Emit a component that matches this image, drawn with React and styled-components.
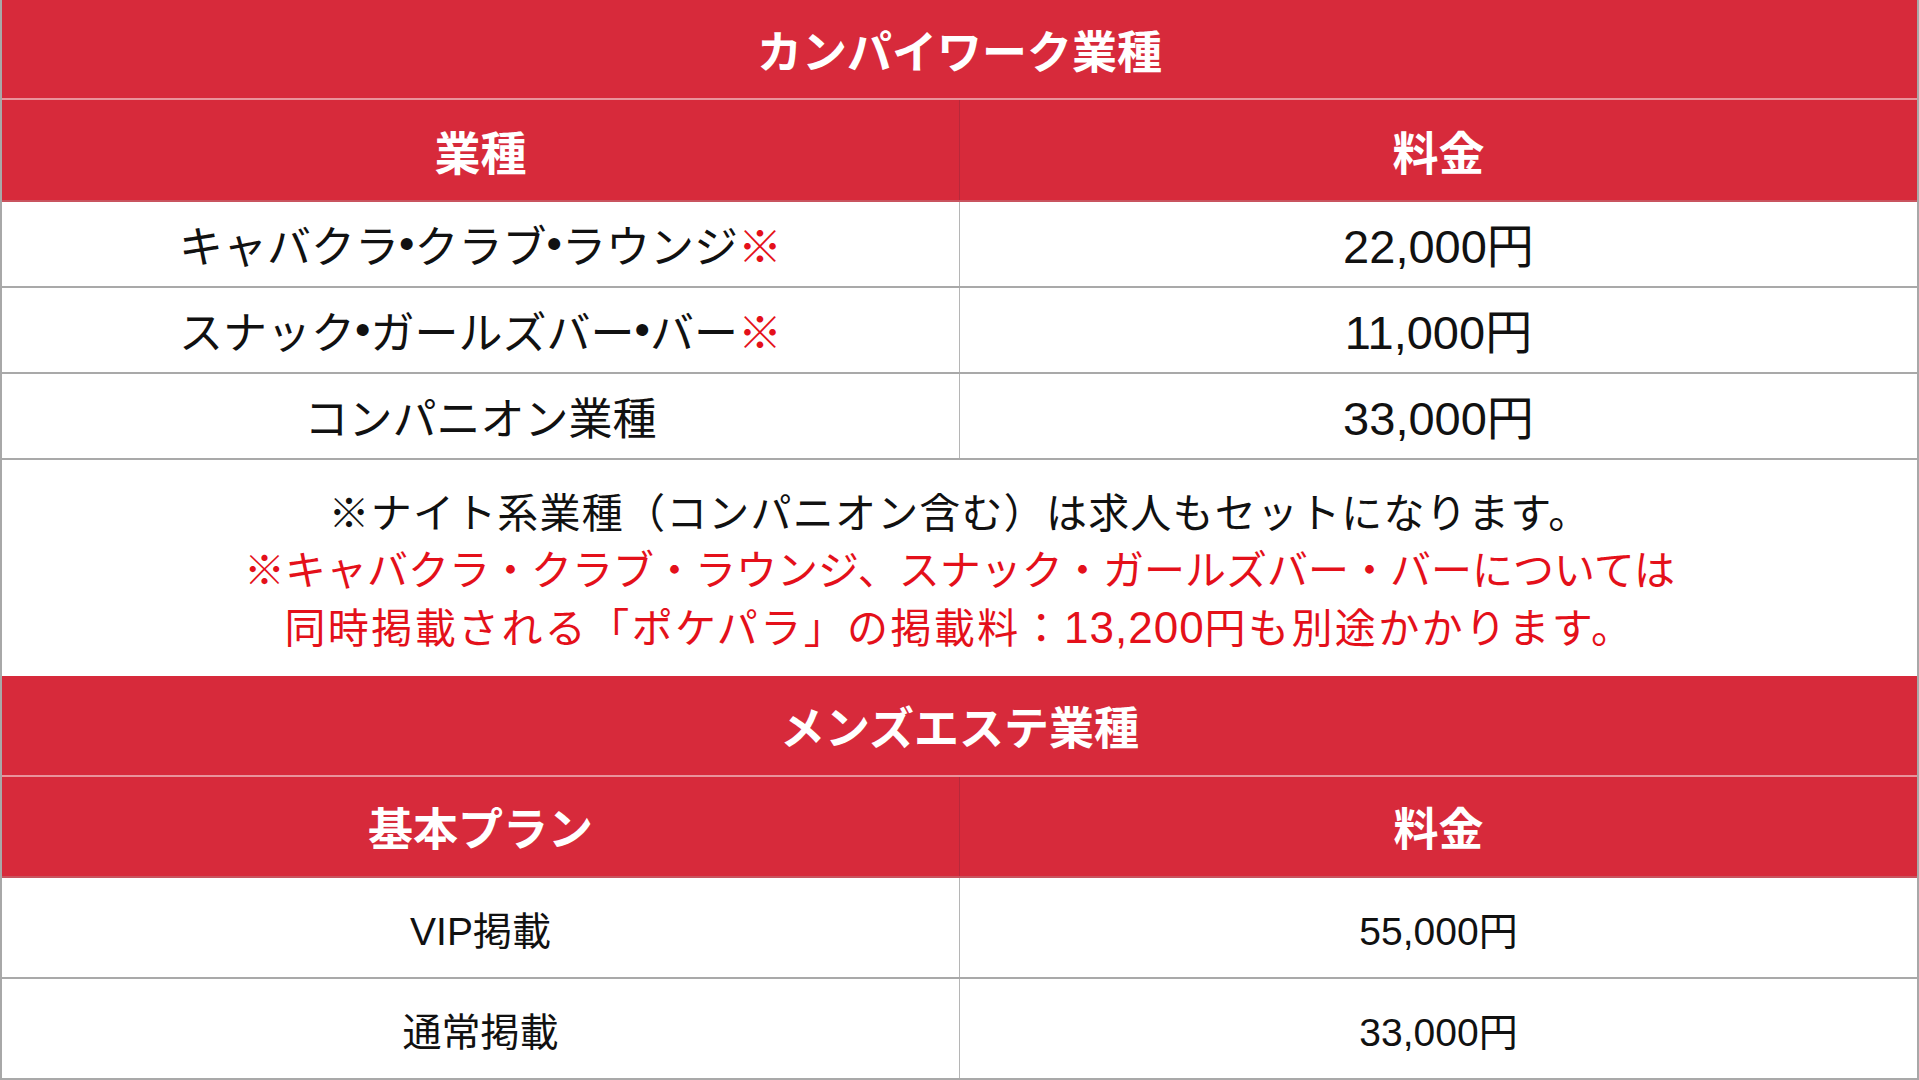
import React from "react";
import styled, { createGlobalStyle } from "styled-components";

const Global = createGlobalStyle`
  html, body { margin: 0; padding: 0; background: #ffffff; overflow: hidden; }
  body { font-family: "Liberation Sans", "Noto Sans CJK JP", sans-serif; }
  * { box-sizing: border-box; }
`;

const RED = "#d72a3b";
const TEXT_RED = "#e4101a";

const Page = styled.div`
  width: 1919px;
  height: 1080px;
  display: flex;
  flex-direction: column;
  background: #ffffff;
  border-left: 2px solid #a8a8a8;
  border-right: 2px solid #a8a8a8;
`;

const SectionTitle = styled.div`
  height: ${(p) => p.$h}px;
  background: ${RED};
  color: #ffffff;
  font-family: "Noto Sans CJK JP", sans-serif;
  font-weight: 700;
  font-size: 45px;
  display: flex;
  align-items: center;
  justify-content: center;
  border-bottom: 2px solid #e9939b;
`;

const Row = styled.div`
  height: ${(p) => p.$h}px;
  display: grid;
  grid-template-columns: 958px 1fr;
  background: ${(p) => (p.$head ? RED : "#ffffff")};
  border-bottom: 2px solid ${(p) => (p.$head ? "#c9545f" : "#a9a9a9")};
`;

const Cell = styled.div`
  display: flex;
  align-items: center;
  justify-content: center;
  border-right: ${(p) => (p.$first ? `1px solid ${p.$head ? "#b8283a" : "#b5b5b5"}` : "none")};
  color: ${(p) => (p.$head ? "#ffffff" : "#111111")};
  font-weight: ${(p) => (p.$head ? 700 : 400)};
  font-size: ${(p) => p.$size}px;
  font-family: ${(p) =>
    p.$head ? `"Noto Sans CJK JP", sans-serif` : `"Liberation Sans", "Noto Sans CJK JP", sans-serif`};
  white-space: nowrap;
  padding-bottom: ${(p) => p.$lift || 0}px;
`;

const Mark = styled.span`
  color: ${TEXT_RED};
`;

const Dot = styled.span`
  font-family: "Liberation Sans", sans-serif;
`;

const Notes = styled.div`
  height: 216px;
  display: flex;
  flex-direction: column;
  align-items: center;
  justify-content: center;
  padding-top: 2px;
  font-family: "Noto Sans CJK JP", "Liberation Sans", sans-serif;
  font-weight: 400;
  font-size: 41px;
  line-height: 57.5px;
  white-space: nowrap;
`;

const NoteLine = styled.div`
  color: ${(p) => (p.$red ? TEXT_RED : "#111111")};
  letter-spacing: ${(p) => p.$ls || 0}px;
`;

const Num = styled.span`
  font-family: "Liberation Sans", sans-serif;
  font-size: 44px;
  letter-spacing: 1px;
`;

const kanpai = [
  {
    name: (
      <>
        キャバクラ<Dot>•</Dot>クラブ<Dot>•</Dot>ラウンジ<Mark>※</Mark>
      </>
    ),
    price: "22,000円",
    h: 86,
  },
  {
    name: (
      <>
        スナック<Dot>•</Dot>ガールズバー<Dot>•</Dot>バー<Mark>※</Mark>
      </>
    ),
    price: "11,000円",
    h: 86,
  },
  { name: "コンパニオン業種", price: "33,000円", h: 86 },
];

const mens = [
  { name: "VIP掲載", price: "55,000円", h: 101 },
  { name: "通常掲載", price: "33,000円", h: 101 },
];

export default function App() {
  return (
    <>
      <Global />
      <Page>
        <SectionTitle $h={100}>カンパイワーク業種</SectionTitle>
        <Row $head $h={102}>
          <Cell $head $first $size={46}>業種</Cell>
          <Cell $head $size={46}>料金</Cell>
        </Row>
        {kanpai.map((r, i) => (
          <Row key={i} $h={r.h}>
            <Cell $first $size={44}>{r.name}</Cell>
            <Cell $size={47} $lift={4}>{r.price}</Cell>
          </Row>
        ))}
        <Notes>
          <NoteLine $ls={1.2}>※ナイト系業種（コンパニオン含む）は求人もセットになります。</NoteLine>
          <NoteLine $red>※キャバクラ・クラブ・ラウンジ、スナック・ガールズバー・バーについては</NoteLine>
          <NoteLine $red $ls={2.4}>
            同時掲載される「ポケパラ」の掲載料：<Num>13,200</Num>円も別途かかります。
          </NoteLine>
        </Notes>
        <SectionTitle $h={101}>メンズエステ業種</SectionTitle>
        <Row $head $h={101}>
          <Cell $head $first $size={45}>基本プラン</Cell>
          <Cell $head $size={45}>料金</Cell>
        </Row>
        {mens.map((r, i) => (
          <Row key={i} $h={r.h}>
            <Cell $first $size={39}>{r.name}</Cell>
            <Cell $size={39}>{r.price}</Cell>
          </Row>
        ))}
      </Page>
    </>
  );
}
